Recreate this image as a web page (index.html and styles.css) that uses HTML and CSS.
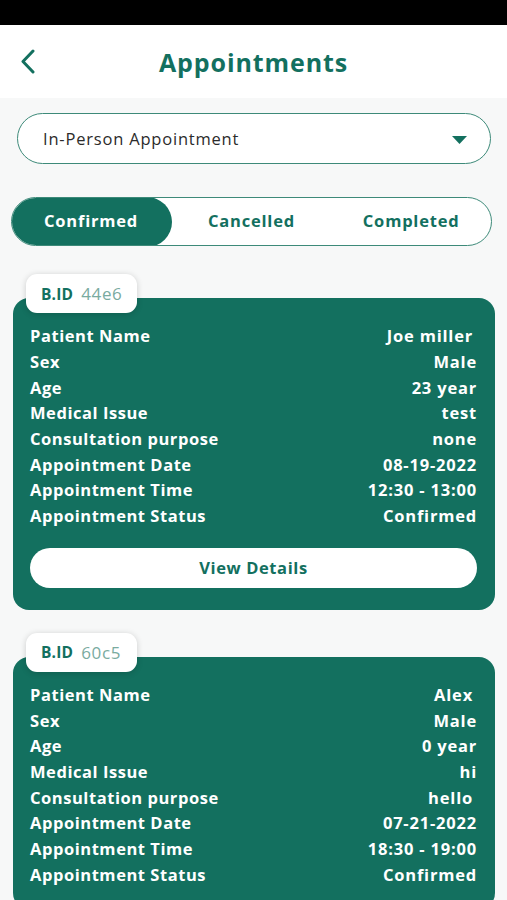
FILE: index.html
```html
<!DOCTYPE html>
<html lang="en">
<head>
<meta charset="utf-8">
<title>Appointments</title>
<link rel="stylesheet" href="styles.css">
</head>
<body>
<div class="statusbar"></div>
<header class="topbar">
  <svg class="back" width="16" height="26" viewBox="0 0 16 26"><path d="M13 2 L3 12.5 L13 23" fill="none" stroke="#13705f" stroke-width="3" stroke-linecap="round" stroke-linejoin="round"/></svg>
  <h1 class="title">Appointments</h1>
</header>
<main class="content">
  <div class="select">
    <span class="select-text">In-Person Appointment</span>
    <svg class="caret" width="15" height="8" viewBox="0 0 15 8"><path d="M0 0 H15 L7.5 8 Z" fill="#13705f"/></svg>
  </div>
  <nav class="tabs">
    <div class="tab active">Confirmed</div>
    <div class="tab">Cancelled</div>
    <div class="tab">Completed</div>
  </nav>

  <section class="card">
    <div class="badge"><span class="badge-label">B.ID</span><span class="badge-id">44e6</span></div>
    <div class="rows">
      <div class="row"><span>Patient Name</span><span class="v pad">Joe miller</span></div>
      <div class="row"><span>Sex</span><span class="v">Male</span></div>
      <div class="row"><span>Age</span><span class="v">23 year</span></div>
      <div class="row"><span>Medical Issue</span><span class="v">test</span></div>
      <div class="row"><span>Consultation purpose</span><span class="v">none</span></div>
      <div class="row"><span>Appointment Date</span><span class="v">08-19-2022</span></div>
      <div class="row"><span>Appointment Time</span><span class="v">12:30 - 13:00</span></div>
      <div class="row"><span>Appointment Status</span><span class="v">Confirmed</span></div>
    </div>
    <button class="details">View Details</button>
  </section>

  <section class="card">
    <div class="badge"><span class="badge-label">B.ID</span><span class="badge-id">60c5</span></div>
    <div class="rows">
      <div class="row"><span>Patient Name</span><span class="v pad">Alex</span></div>
      <div class="row"><span>Sex</span><span class="v">Male</span></div>
      <div class="row"><span>Age</span><span class="v">0 year</span></div>
      <div class="row"><span>Medical Issue</span><span class="v">hi</span></div>
      <div class="row"><span>Consultation purpose</span><span class="v pad">hello</span></div>
      <div class="row"><span>Appointment Date</span><span class="v">07-21-2022</span></div>
      <div class="row"><span>Appointment Time</span><span class="v">18:30 - 19:00</span></div>
      <div class="row"><span>Appointment Status</span><span class="v">Confirmed</span></div>
    </div>
  </section>
</main>
</body>
</html>
```

FILE: styles.css
```css
* { box-sizing: border-box; }
html, body { margin: 0; padding: 0; }
body {
  width: 507px;
  height: 900px;
  overflow: hidden;
  background: #f7f8f8;
  font-family: "Open Sans", "Noto Sans", sans-serif;
  color: #13705f;
}
.statusbar { height: 25px; background: #000; }
.topbar {
  height: 73px;
  background: #fff;
  display: flex;
  align-items: center;
  justify-content: center;
  position: relative;
}
.back { position: absolute; left: 20px; top: 24px; }
.title {
  margin: 0;
  font-size: 25px;
  font-weight: 700;
  color: #13705f;
  letter-spacing: 0.9px;
}
.content { padding: 15px 0 0; }
.select {
  margin: 0 16px 0 17px;
  height: 51px;
  border: 1.5px solid #3d8a79;
  border-radius: 26px;
  background: #fff;
  display: flex;
  align-items: center;
  justify-content: space-between;
  padding: 0 23px 0 25px;
}
.select-text { font-size: 16.5px; color: #2b2b2b; letter-spacing: 0.8px; }
.caret { margin-top: 2px; }
.tabs {
  margin: 33px 15px 0 11px;
  height: 49px;
  border: 1.5px solid #3d8a79;
  border-radius: 25px;
  background: #fff;
  display: grid;
  grid-template-columns: 1fr 1fr 1fr;
  overflow: hidden;
}
.tab {
  display: flex;
  align-items: center;
  justify-content: center;
  font-size: 16.5px;
  font-weight: 700;
  letter-spacing: 0.8px;
  color: #13705f;
  padding-bottom: 3px;
}
.tab.active {
  background: #13705f;
  color: #fff;
  border-radius: 25px;
  margin: -1.5px 0 -1.5px -1.5px;
}
.card {
  position: relative;
  margin: 52px 12px 0 13px;
  background: #13705f;
  border-radius: 16px;
  padding: 25px 18px 22px 17px;
}
.card + .card { margin-top: 47px; }
.badge {
  position: absolute;
  left: 13px;
  top: -24px;
  height: 39px;
  width: 111px;
  background: #fff;
  border-radius: 11px;
  box-shadow: 0 1px 6px rgba(0,0,0,0.18);
  display: flex;
  align-items: center;
  padding-left: 15px;
  gap: 8px;
  font-size: 15.5px;
}
.badge-label { font-weight: 700; color: #13705f; letter-spacing: 0.2px; }
.badge-id { color: #7aab9f; font-weight: 400; font-size: 17px; letter-spacing: 0.6px; }
.rows { display: flex; flex-direction: column; }
.row {
  display: flex;
  justify-content: space-between;
  height: 25.7px;
  align-items: center;
  color: #fff;
  font-size: 16.5px;
  font-weight: 700;
  letter-spacing: 0.55px;
}
.v { letter-spacing: 0.8px; }
.v.pad { margin-right: 4px; }
.details {
  display: block;
  width: 100%;
  margin-top: 19px;
  height: 40px;
  border: none;
  border-radius: 20px;
  background: #fff;
  color: #13705f;
  font-family: inherit;
  font-size: 16.5px;
  font-weight: 700;
  letter-spacing: 0.6px;
}
```
